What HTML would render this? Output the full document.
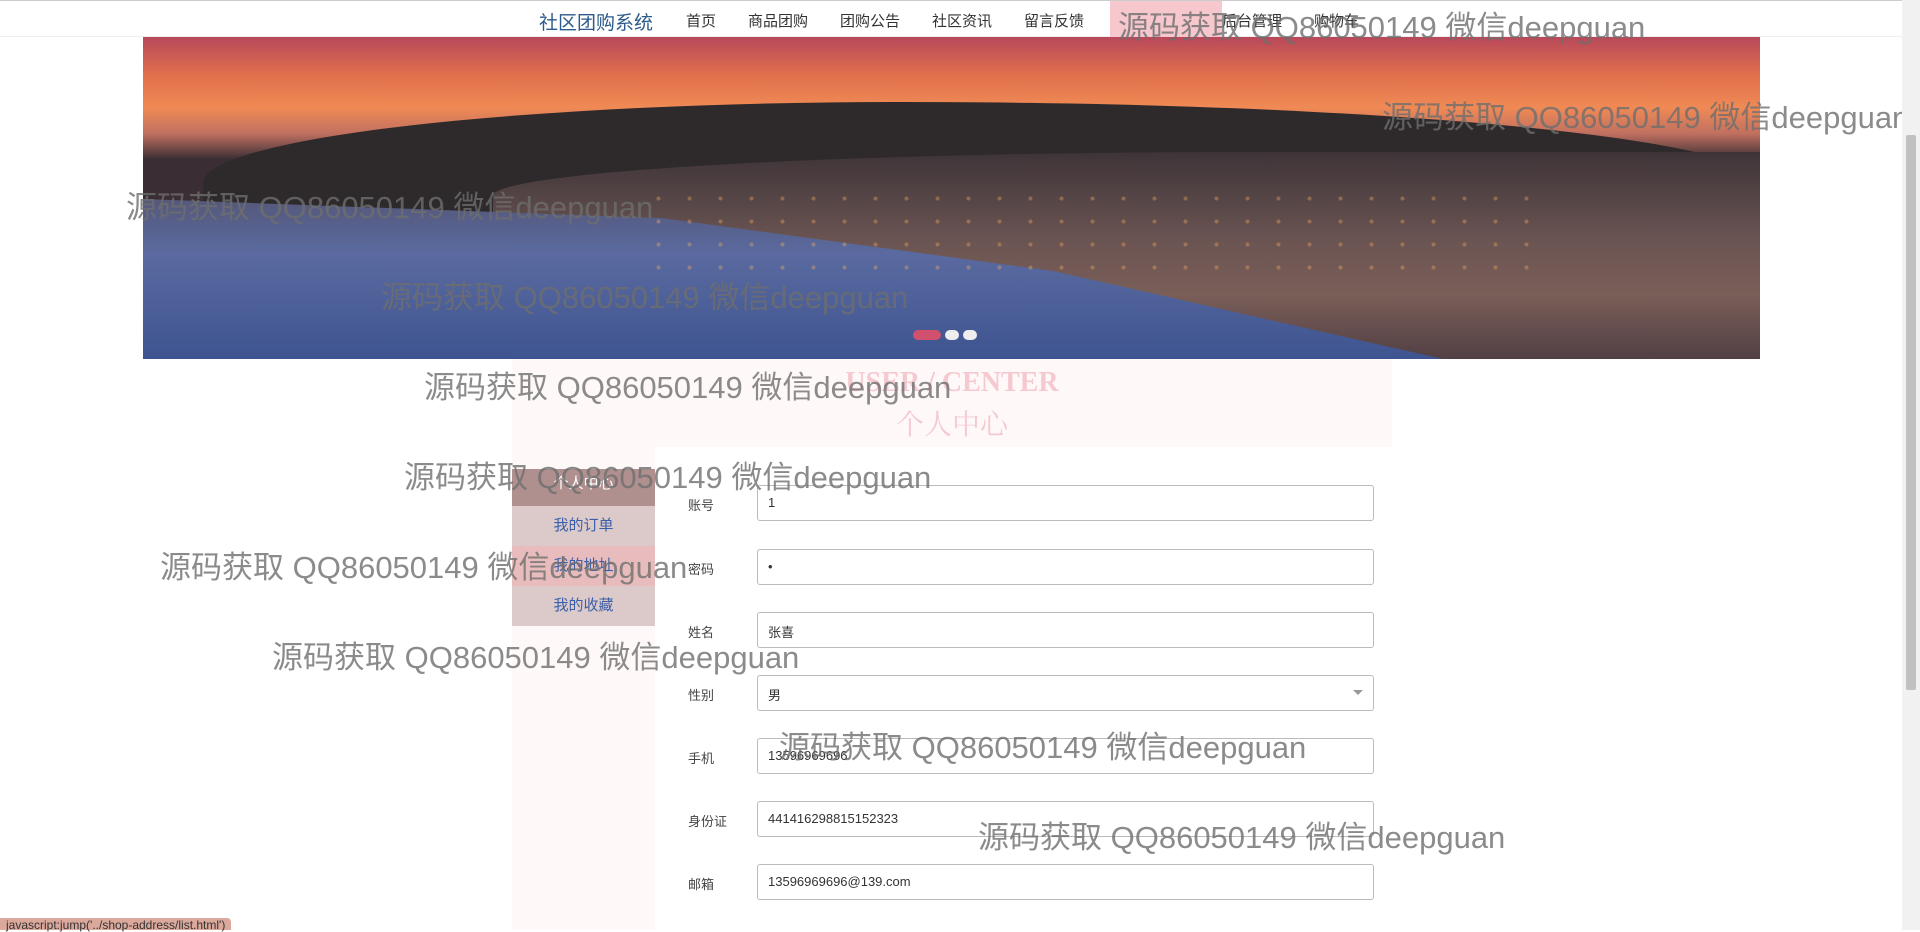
<!DOCTYPE html>
<html><head><meta charset="utf-8"><style>
*{margin:0;padding:0;box-sizing:border-box}
body{width:1920px;height:930px;overflow:hidden;background:#fff;font-family:"Liberation Sans","Noto Sans CJK SC",sans-serif;position:relative}
.nav{position:absolute;top:0;left:0;width:1902px;height:37px;background:#fff;border-bottom:1px solid #eee;border-top:1px solid #ccc}
.nav span{position:absolute;top:9px;font-size:15px;color:#333}
.banner{position:absolute;left:143px;top:37px;width:1617px;height:322px;overflow:hidden;
background:linear-gradient(180deg,#b8485a 0%,#e0704c 12%,#f08a55 22%,#c07060 30%,#3a2e34 38%)}
.hill{position:absolute;left:60px;right:0;top:65px;height:270px;background:#2e2a2c;border-radius:45% 55% 0 0/30% 30% 0 0}
.city{position:absolute;left:350px;right:0;top:115px;height:220px;background:linear-gradient(180deg,#3e3438,#6a5452 40%,#7a5e58 65%,#4a3a40);border-radius:60% 0 0 0/20% 0 0 0}
.water{position:absolute;left:0;width:1300px;bottom:0;height:160px;background:linear-gradient(180deg,#55587a,#5a6aa0 35%,#3e5490);clip-path:polygon(0 0,40% 12%,70% 45%,100% 100%,0 100%)}
.lights{position:absolute;left:500px;top:150px;width:900px;height:100px;background:radial-gradient(circle,#ffb060 0 1.5px,transparent 2.5px) 0 0/31px 23px;opacity:.35}
.dots{position:absolute;left:770px;top:293px;display:flex;gap:4px}
.dots i{display:block;height:10px;width:14px;border-radius:5px;background:#eee}
.dots i:first-child{width:28px;background:#d0506e}
.hdr{position:absolute;left:512px;top:359px;width:880px;height:88px;background:#fff8f8;text-align:center;font-family:"Liberation Serif","Noto Serif CJK SC",serif;color:#f4c9d0}
.col{position:absolute;left:512px;top:447px;width:143px;height:483px;background:#fff8f8}
.side{position:absolute;left:512px;top:469px;width:143px}
.side div{height:40px;line-height:40px;text-align:center;font-size:15px;color:#3a5fa8;background:#dccaca}
.side div.h{background:#b08f8f;color:#fff;height:37px;line-height:30px}
.side div.a{background:#e8bcbc}
.lab{position:absolute;left:688px;font-size:13px;color:#444}
.inp{position:absolute;left:757px;width:617px;height:36px;border:1px solid #bbb;border-radius:3px;font-size:13px;color:#333;padding:9px 10px}
.wm{position:absolute;font-size:31px;color:rgba(110,110,110,.8);white-space:nowrap}
.sb{position:absolute;right:0;top:0;width:18px;height:930px;background:#f1f1f1}
.sb i{position:absolute;left:4px;top:135px;width:10px;height:555px;background:#c1c1c1;border-radius:2px}
.st{position:absolute;left:0;top:918px;font-size:12px;background:#dba89c;padding:0 6px;height:12px;line-height:14px;color:#333;border-radius:0 4px 0 0}
</style></head><body>
<div class="nav">
<span style="left:539px;font-size:19px;top:7px;color:#2c5a8a">社区团购系统</span>
<span style="left:686px">首页</span><span style="left:748px">商品团购</span><span style="left:840px">团购公告</span><span style="left:932px">社区资讯</span><span style="left:1024px">留言反馈</span>
<span style="left:1110px;top:0;width:112px;height:37px;background:#f6c7cc"></span>
<span style="left:1222px">后台管理</span><span style="left:1314px">购物车</span>
</div>
<div class="banner"><div class="hill"></div><div class="city"></div><div class="water"></div><div class="lights"></div><div class="dots"><i></i><i></i><i></i></div></div>
<div class="hdr"><div style="font-size:28px;font-weight:bold;padding-top:8px">USER / CENTER</div><div style="font-size:28px;margin-top:4px">个人中心</div></div>
<div class="col"></div>
<div class="side"><div class="h">个人中心</div><div>我的订单</div><div class="a">我的地址</div><div>我的收藏</div></div>
<div class="lab" style="top:495px">账号</div><div class="inp" style="top:485px">1</div>
<div class="lab" style="top:559px">密码</div><div class="inp" style="top:549px">•</div>
<div class="lab" style="top:622px">姓名</div><div class="inp" style="top:612px">张喜</div>
<div class="lab" style="top:685px">性别</div><div class="inp" style="top:675px">男<span style="position:absolute;right:10px;top:14px;border:5px solid transparent;border-top-color:#999"></span></div>
<div class="lab" style="top:748px">手机</div><div class="inp" style="top:738px">13596969696</div>
<div class="lab" style="top:811px">身份证</div><div class="inp" style="top:801px">441416298815152323</div>
<div class="lab" style="top:874px">邮箱</div><div class="inp" style="top:864px">13596969696@139.com</div>
<div class="wm" style="left:1118px;top:2px">源码获取 QQ86050149 微信deepguan</div>
<div class="wm" style="left:1382px;top:92px">源码获取 QQ86050149 微信deepguan</div>
<div class="wm" style="left:126px;top:182px">源码获取 QQ86050149 微信deepguan</div>
<div class="wm" style="left:381px;top:272px">源码获取 QQ86050149 微信deepguan</div>
<div class="wm" style="left:424px;top:362px">源码获取 QQ86050149 微信deepguan</div>
<div class="wm" style="left:404px;top:452px">源码获取 QQ86050149 微信deepguan</div>
<div class="wm" style="left:160px;top:542px">源码获取 QQ86050149 微信deepguan</div>
<div class="wm" style="left:272px;top:632px">源码获取 QQ86050149 微信deepguan</div>
<div class="wm" style="left:779px;top:722px">源码获取 QQ86050149 微信deepguan</div>
<div class="wm" style="left:978px;top:812px">源码获取 QQ86050149 微信deepguan</div>
<div class="sb"><i></i></div>
<div class="st">javascript:jump('../shop-address/list.html')</div>
</body></html>
